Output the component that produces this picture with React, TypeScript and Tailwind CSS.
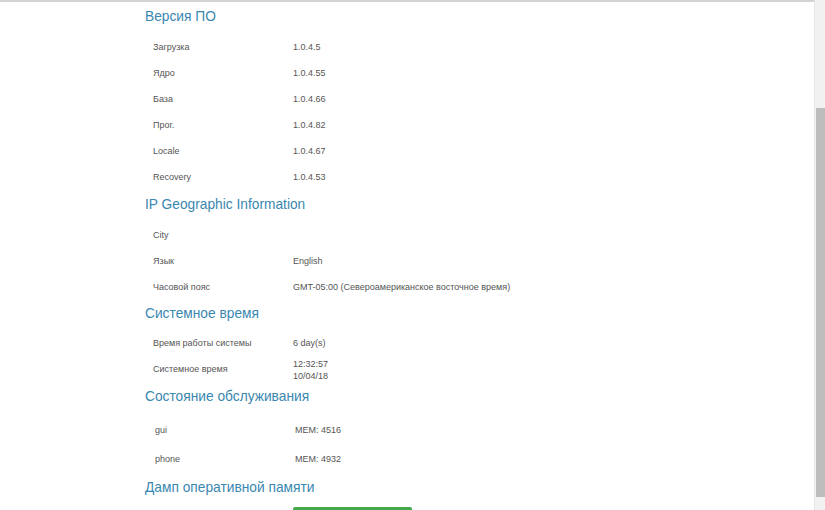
import React from "react";

type Row = { label: string; value: React.ReactNode };

type Section = {
  title: string;
  rows: Row[];
  rowClass: string;
  bodyClass: string;
  headClass: string;
};

const sections: Section[] = [
  {
    title: "Версия ПО",
    headClass: "",
    bodyClass: "pt-[4px] pl-2",
    rowClass: "h-[26px]",
    rows: [
      { label: "Загрузка", value: "1.0.4.5" },
      { label: "Ядро", value: "1.0.4.55" },
      { label: "База", value: "1.0.4.66" },
      { label: "Прог.", value: "1.0.4.82" },
      { label: "Locale", value: "1.0.4.67" },
      { label: "Recovery", value: "1.0.4.53" },
    ],
  },
  {
    title: "IP Geographic Information",
    headClass: "",
    bodyClass: "pt-[4px] pl-2",
    rowClass: "h-[26px]",
    rows: [
      { label: "City", value: "" },
      { label: "Язык", value: "English" },
      { label: "Часовой пояс", value: "GMT-05:00 (Североамериканское восточное время)" },
    ],
  },
  {
    title: "Системное время",
    headClass: "-mt-px",
    bodyClass: "pt-[3px] pl-2",
    rowClass: "h-[26px]",
    rows: [
      { label: "Время работы системы", value: "6 day(s)" },
      {
        label: "Системное время",
        value: (
          <span className="flex flex-col leading-[12px]">
            <span>12:32:57</span>
            <span>10/04/18</span>
          </span>
        ),
      },
    ],
  },
  {
    title: "Состояние обслуживания",
    headClass: "",
    bodyClass: "pt-[5px] pl-[10px]",
    rowClass: "h-[29px]",
    rows: [
      { label: "gui", value: "MEM: 4516" },
      { label: "phone", value: "MEM: 4932" },
    ],
  },
];

function InfoSection({ section }: { section: Section }) {
  return (
    <div>
      <h2
        className={`${section.headClass} flex h-[28px] items-center text-[13.75px] font-normal text-[#3a87b0]`}
      >
        {section.title}
      </h2>
      <div className={section.bodyClass}>
        {section.rows.map((row) => (
          <div
            key={row.label}
            className={`${section.rowClass} flex items-center text-[9px] text-[#555]`}
          >
            <div className="w-[140px] shrink-0">{row.label}</div>
            <div>{row.value}</div>
          </div>
        ))}
      </div>
    </div>
  );
}

export default function App() {
  return (
    <div
      className="flex h-[510px] w-[825px] overflow-hidden bg-white"
      style={{ fontFamily: '"Liberation Sans", Arial, sans-serif' }}
    >
      <div className="flex-1 border-t-2 border-[#d2d2d2] pl-[145px] pt-px">
        {sections.map((s) => (
          <InfoSection key={s.title} section={s} />
        ))}
        <h2 className="flex h-[28px] items-center text-[13.75px] font-normal text-[#3a87b0]">
          Дамп оперативной памяти
        </h2>
        <div className="mt-[5px] pl-[148px]">
          <button
            type="button"
            className="h-[28px] w-[119px] rounded-[2px] bg-[#45a84a] text-[11px] text-white"
          />
        </div>
      </div>

      {/* scrollbar */}
      <div className="w-[11px] shrink-0 border-l border-[#e6e6e6] bg-[#f1f1f1] pt-[108px]">
        <div className="mx-auto h-[389px] w-[9px] bg-[#bdbdbd]" />
      </div>
    </div>
  );
}
